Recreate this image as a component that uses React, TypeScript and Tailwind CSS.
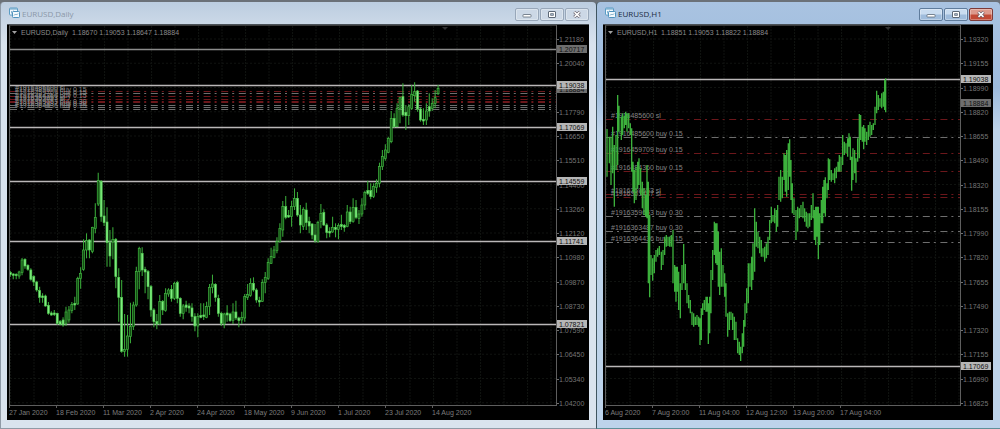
import { useId } from 'react';

type Candle = [number, number, number, number, number?];
type Level = { y: number; price: string; dim?: boolean };
type Order = { y: number; label: string; red?: boolean };
type Series = { x: number; y: number; bars: number[][] };

const GREEN = '#3cb03c';
const PLOT_H = 379;

// [high, body top, body bottom, low, 1 = bullish], three units per pixel
const DAILY: Candle[] = [
    [363, 368, 374, 380], [370, 372, 376, 388], [370, 373, 377, 388], [362, 366, 378, 386, 1],
    [324, 330, 368, 376, 1], [325, 328, 348, 356], [343, 346, 358, 362], [355, 360, 388, 392],
    [376, 380, 396, 408], [392, 396, 420, 425], [410, 422, 442, 458], [430, 438, 443, 458],
    [434, 438, 468, 470], [456, 466, 490, 494], [484, 489, 495, 497], [480, 489, 494, 498],
    [488, 490, 520, 524], [510, 515, 523, 526], [502, 510, 525, 530], [470, 486, 520, 528, 1],
    [468, 480, 510, 518, 1], [456, 464, 482, 490, 1], [440, 460, 465, 480], [380, 386, 462, 464, 1],
    [352, 370, 386, 416, 1], [268, 300, 358, 362, 1], [250, 272, 300, 325, 1], [268, 270, 300, 325],
    [230, 232, 305, 310, 1], [160, 202, 236, 250, 1], [68, 92, 162, 168, 1], [90, 94, 200, 215],
    [150, 198, 218, 228], [172, 216, 278, 350], [240, 278, 318, 350], [232, 268, 276, 328, 1],
    [264, 268, 380, 415], [355, 382, 442, 515], [390, 442, 604, 608], [492, 598, 604, 620, 1],
    [495, 558, 598, 620, 1], [458, 530, 560, 580, 1], [455, 465, 530, 540, 1], [350, 365, 465, 470, 1],
    [290, 295, 365, 418, 1], [292, 310, 360, 378], [350, 358, 366, 430], [360, 365, 410, 448],
    [405, 410, 480, 500], [475, 480, 515, 532], [492, 515, 522, 538], [435, 455, 522, 524, 1],
    [450, 455, 480, 495], [415, 430, 482, 485, 1], [415, 420, 432, 440, 1], [405, 418, 445, 455],
    [395, 400, 445, 450, 1], [392, 398, 445, 460], [442, 445, 490, 500], [462, 468, 490, 508, 1],
    [452, 465, 472, 485], [460, 468, 474, 490], [460, 474, 500, 515], [490, 500, 528, 544],
    [490, 500, 528, 562, 1], [460, 496, 502, 505], [460, 495, 500, 510], [455, 470, 502, 505, 1],
    [402, 412, 470, 495, 1], [374, 402, 412, 430, 1], [400, 403, 442, 455], [434, 445, 490, 500],
    [485, 490, 520, 528], [488, 492, 522, 535, 1], [466, 489, 495, 515], [488, 492, 512, 515],
    [460, 486, 512, 522, 1], [452, 486, 504, 510], [500, 504, 512, 532], [485, 502, 510, 522, 1],
    [432, 440, 504, 515, 1], [402, 434, 442, 450, 1], [385, 400, 436, 440, 1], [382, 400, 420, 425],
    [415, 420, 450, 458], [440, 451, 456, 470], [388, 398, 454, 456, 1], [366, 382, 398, 430, 1],
    [325, 338, 385, 390, 1], [293, 320, 340, 342, 1], [288, 300, 322, 325, 1], [262, 275, 302, 310, 1],
    [220, 235, 275, 278, 1], [153, 170, 240, 260, 1], [138, 170, 202, 208], [180, 196, 201, 204],
    [152, 170, 200, 230, 1], [115, 145, 170, 180, 1], [126, 145, 195, 200], [165, 195, 225, 250],
    [172, 178, 230, 240, 1], [158, 180, 218, 240], [200, 215, 228, 250], [220, 222, 255, 268],
    [222, 255, 272, 278], [212, 218, 275, 278, 1], [162, 190, 215, 235, 1], [178, 188, 225, 228],
    [220, 225, 248, 265], [232, 244, 249, 262], [200, 232, 246, 248, 1], [220, 232, 238, 262],
    [220, 226, 238, 268, 1], [194, 224, 230, 240], [222, 226, 232, 245], [165, 186, 230, 232, 1],
    [170, 186, 215, 222], [145, 172, 215, 218, 1], [150, 172, 202, 208], [180, 192, 205, 222, 1],
    [145, 165, 192, 200, 1], [122, 128, 165, 180, 1], [92, 122, 130, 135], [100, 122, 140, 148],
    [100, 110, 140, 144, 1], [88, 100, 112, 128, 1], [38, 50, 100, 112, 1], [0, 20, 50, 60, 1],
    [-17, 0, 25, 32, 1], [-40, -35, 7, 10, 1], [-117, -95, -25, -20, 1], [-110, -95, -70, -67],
    [-140, -125, -70, -68, 1], [-160, -157, -125, -80, 1], [-200, -160, -105, -100], [-135, -113, -103, -60],
    [-137, -130, -103, -75, 1], [-195, -167, -125, -120, 1], [-203, -175, -163, -145, 1], [-180, -177, -123, -115],
    [-127, -123, -90, -85], [-125, -92, -87, -75], [-140, -117, -90, -75, 1], [-170, -130, -117, -100],
    [-155, -140, -125, -117, 1], [-180, -157, -140, -125, 1], [-195, -185, -170, -165, 1],
];

// [x, high, low], three units per pixel from each block's origin
const HOURLY: Series[] = [
    {
        x: -5, y: 59,
        bars: [
            [18, 132, 275], [25, 155, 235], [30, 155, 300], [35, 125, 265], [40, 180, 365], [45, 150, 255],
            [50, 30, 240], [54, 62, 140], [61, 95, 165], [65, 85, 150], [70, 92, 130], [74, 80, 120],
            [78, 85, 140], [83, 85, 130], [88, 115, 150], [92, 130, 260], [96, 230, 320], [100, 255, 355],
            [105, 245, 345], [110, 230, 312], [114, 220, 300], [119, 250, 330], [124, 290, 370],
            [129, 310, 390], [134, 330, 395], [138, 240, 400], [142, 290, 595], [146, 390, 637],
        ],
    },
    {
        x: -10, y: 114,
        bars: [
            [165, 345, 405], [170, 355, 422], [175, 345, 400], [180, 330, 365], [185, 325, 350], [190, 318, 345],
            [196, 335, 390], [201, 330, 375], [206, 290, 345], [211, 285, 320], [216, 290, 318], [221, 290, 320],
            [226, 285, 320], [231, 270, 430], [236, 375, 455], [240, 380, 485], [244, 380, 455], [248, 395, 510],
            [253, 430, 535], [258, 375, 450], [263, 312, 430], [268, 372, 450], [273, 430, 490], [278, 465, 505],
            [283, 480, 520], [288, 515, 555], [293, 520, 560], [298, 530, 555], [303, 525, 555], [308, 530, 560],
            [312, 535, 615], [316, 505, 600], [320, 490, 525], [325, 480, 510], [330, 470, 515], [334, 470, 515],
            [337, 490, 612], [341, 470, 580], [345, 390, 520], [350, 330, 420], [355, 245, 345], [359, 250, 370],
            [363, 250, 375], [367, 275, 440], [371, 335, 465], [376, 325, 440], [381, 375, 440], [386, 400, 470],
            [390, 430, 530], [395, 520, 590], [400, 515, 570], [405, 515, 540], [410, 520, 570], [415, 530, 600],
            [420, 545, 600], [425, 595, 640], [430, 605, 645], [434, 620, 663], [439, 580, 640], [443, 540, 620],
            [447, 490, 560], [452, 445, 520], [457, 370, 490], [462, 370, 440], [467, 350, 450], [471, 310, 420],
            [476, 205, 395], [481, 245, 320], [486, 275, 325], [491, 290, 340], [496, 300, 350], [501, 325, 350],
            [506, 320, 365], [511, 310, 355], [516, 290, 345], [521, 240, 300], [526, 200, 250], [531, 225, 245],
            [536, 205, 250], [541, 210, 275], [545, 195, 260], [549, 110, 180], [554, 90, 185], [559, 110, 175],
            [564, 40, 120], [568, 45, 155], [572, 30, 170], [577, 10, 150], [581, -2, 110], [585, 60, 180],
            [589, 130, 220], [594, 175, 225], [600, 210, 300], [605, 200, 275], [610, 205, 235], [615, 195, 230],
            [621, 185, 235], [626, 205, 245], [631, 215, 260], [636, 220, 265],
        ],
    },
    {
        x: 185, y: 44,
        bars: [
            [56, 430, 470], [61, 405, 450], [66, 370, 445], [70, 420, 510], [74, 410, 525], [78, 410, 500],
            [82, 410, 568], [86, 430, 525], [91, 390, 460], [95, 350, 460], [99, 330, 430], [103, 322, 440],
            [108, 340, 385], [112, 265, 360], [116, 268, 330], [121, 300, 335], [126, 310, 330], [131, 295, 340],
            [136, 290, 325], [141, 275, 305], [145, 255, 305], [150, 260, 305], [155, 195, 285], [160, 215, 255],
            [165, 220, 250], [170, 205, 260], [174, 190, 230], [178, 200, 270], [182, 260, 362], [186, 235, 330],
            [191, 240, 310], [195, 265, 338], [200, 205, 275], [205, 132, 265], [209, 135, 210], [214, 170, 215],
            [218, 165, 238], [222, 175, 215], [227, 185, 225], [232, 165, 210], [237, 155, 200], [242, 165, 195],
            [247, 160, 180], [252, 110, 165], [257, 62, 130], [262, 75, 120], [267, 85, 110], [272, 70, 115],
            [277, 65, 110], [281, 30, 120], [284, 25, 127],
        ],
    },
];

const ORDER_LABELS = [
    '#1916485600 sl', '#1916485600 buy 0.15', '#1916459709 buy 0.15', '#1916484360 buy 0.15',
    '#1916359653 sl', '#1916363487 sl', '#1916359653 buy 0.30', '#1916363487 buy 0.30', '#1916364436 buy 0.15',
];
const RED = [true, false, true, true, true, true, false, false, false];
const toOrders = (ys: number[]): Order[] => ys.map((y, i) => ({ y, label: ORDER_LABELS[i], red: RED[i] }));

const DAILY_CHART = {
    symbol: 'EURUSD,Daily',
    ohlc: '1.18670 1.19053 1.18647 1.18884',
    ohlcX: 62,
    marker: 435,
    prices: ['1.21180', '1.20040', '1.18900', '1.17790', '1.16650', '1.15510', '1.14400', '1.13260', '1.12120', '1.10980', '1.09870', '1.08730', '1.07590', '1.06450', '1.05340', '1.04200'],
    dates: ['27 Jan 2020', '18 Feb 2020', '11 Mar 2020', '2 Apr 2020', '24 Apr 2020', '18 May 2020', '9 Jun 2020', '1 Jul 2020', '23 Jul 2020', '14 Aug 2020'],
    last: { y: 62, price: '1.18884' },
    levels: [
        { y: 23, price: '1.20717', dim: true }, { y: 59, price: '1.19038' }, { y: 101, price: '1.17069' },
        { y: 155, price: '1.14559' }, { y: 215, price: '1.11741' }, { y: 298, price: '1.07821' },
    ] as Level[],
    orders: toOrders([65, 67, 70, 73, 75, 76, 79, 81, 83]),
};

const HOURLY_CHART = {
    symbol: 'EURUSD,H1',
    ohlc: '1.18851 1.19053 1.18822 1.18884',
    ohlcX: 55,
    marker: 282,
    prices: ['1.19320', '1.19155', '1.18990', '1.18820', '1.18655', '1.18490', '1.18320', '1.18155', '1.17990', '1.17820', '1.17655', '1.17490', '1.17320', '1.17155', '1.16990', '1.16825'],
    dates: ['6 Aug 2020', '7 Aug 20:00', '11 Aug 04:00', '12 Aug 12:00', '13 Aug 20:00', '17 Aug 04:00'],
    last: { y: 76, price: '1.18884' },
    levels: [{ y: 53, price: '1.19038' }, { y: 340, price: '1.17069' }] as Level[],
    orders: toOrders([93, 111, 127, 145, 168, 171, 190, 205, 216]),
};

type ChartData = typeof DAILY_CHART;

const priceY = (i: number) => 13 + i * 24.25;

function DailyCandles() {
    return (
        <g transform="translate(0 124) scale(0.3333)">
            {DAILY.map(([high, top, bottom, low, up], i) => {
                const x = 1 + i * 8.79;
                return (
                    <g key={i}>
                        <path d={`M${x} ${high}V${low}`} stroke="#38a838" strokeWidth={3.2} />
                        <rect
                            x={x - 3} y={top} width={6} height={Math.max(bottom - top, 4)}
                            fill={up ? '#125012' : '#80ee80'} stroke={up ? '#43b843' : '#50c850'} strokeWidth={2}
                        />
                    </g>
                );
            })}
        </g>
    );
}

function HourlyBars() {
    return (
        <>
            {HOURLY.map((s, i) => (
                <path
                    key={i}
                    transform={`translate(${s.x} ${s.y}) scale(0.3333)`}
                    d={s.bars.map(([x, high, low]) => `M${x} ${high}V${low}`).join('')}
                    stroke={GREEN}
                    strokeWidth={4}
                />
            ))}
        </>
    );
}

function Plot({ chart, children }: { chart: ChartData; children: React.ReactNode }) {
    const gridId = useId();
    return (
        <svg className="block w-full" height={PLOT_H} role="img" aria-label={chart.symbol}>
            <defs>
                <pattern id={gridId} width="23.5" height="3" patternUnits="userSpaceOnUse">
                    <path d="M0.5 0V2" stroke="#0f120f" />
                </pattern>
            </defs>
            <rect width="100%" height="100%" fill={`url(#${gridId})`} />
            {chart.prices.map((p, i) => (
                <line key={p} x1="0" x2="100%" y1={priceY(i)} y2={priceY(i)} stroke="#101310" strokeDasharray="2 2" />
            ))}

            {chart.orders.map((o, i) => (
                <g key={i}>
                    <line
                        x1="0" x2="100%" y1={o.y + 0.5} y2={o.y + 0.5}
                        stroke={o.red ? '#6c171b' : '#6e6e6e'} strokeDasharray="7 4 2 4.6"
                    />
                    <text x="5" y={o.y - 1} fill="#858585" className="text-[7px]">{o.label}</text>
                </g>
            ))}

            {chart.levels.map((l) => (
                <line key={l.price} x1="0" x2="100%" y1={l.y + 0.5} y2={l.y + 0.5} stroke={l.dim ? '#8c8c8c' : '#bab7b8'} strokeWidth="1.4" />
            ))}
            {children}

            <path d={`M${chart.marker - 3} 1h6l-3 3z`} fill="#303030" />
            <path d="M2 5h5l-2.500 3z" fill="#a0a0a0" />
            <text x="11" y="9" fill="#8a8a8a" className="text-[7px]">{chart.symbol}</text>
            <text x={chart.ohlcX} y="9" fill="#8a8a8a" className="text-[7px]">{chart.ohlc}</text>
        </svg>
    );
}

function PriceScale({ chart }: { chart: ChartData }) {
    return (
        <svg className="block w-full overflow-visible" height={PLOT_H}>
            {chart.prices.map((p, i) => (
                <g key={p}>
                    <path d={`M0 ${Math.round(priceY(i)) + 0.5}h2`} stroke="#707070" />
                    <text x="2" y={Math.round(priceY(i)) + 3} fill="#757575" className="text-[7px]">{p}</text>
                </g>
            ))}
            <rect y={chart.last.y - 3} width="30" height="8" fill="#6e6e6e" />
            <text x="2" y={chart.last.y + 4} fill="#111" className="text-[7px]">{chart.last.price}</text>
            {chart.levels.map((l) => (
                <g key={l.price}>
                    <rect y={l.y - 4} width="30" height="8" fill={l.dim ? '#6e6e6e' : '#b6b6b6'} />
                    <text x="2" y={l.y + 3} fill="#111" className="text-[7px]">{l.price}</text>
                </g>
            ))}
        </svg>
    );
}

function Chart({ chart, children }: { chart: ChartData; children: React.ReactNode }) {
    return (
        <div className="border-t border-[#4b5258] bg-black pl-[2px]">
            <div className="grid grid-cols-[minmax(0,1fr)_33px]">
                <div className="border-b border-l border-t border-[#5e5e5e] border-t-[#3a3a3a]">
                    <Plot chart={chart}>{children}</Plot>
                </div>
                <div className="border-l border-[#5e5e5e] pt-px">
                    <PriceScale chart={chart} />
                </div>
            </div>
            <ol className="flex h-[14px] overflow-hidden">
                {chart.dates.map((d) => (
                    <li key={d} className="w-[47px] shrink-0 whitespace-nowrap text-[7px] leading-[9px] text-[#7c7c7c]">
                        <span className="block h-[2px] w-px bg-[#5e5e5e]" />
                        {d}
                    </li>
                ))}
            </ol>
        </div>
    );
}

function ChartIcon() {
    return (
        <svg width="12" height="12" viewBox="0 0 12 12" fill="none">
            <rect x="0.500" y="1" width="8" height="7" rx="0.800" fill="#f3f9fd" stroke="#5a9cc4" />
            <path d="M1 2h7" stroke="#5a9cc4" />
            <path d="M2.500 4v2.500M4.500 3.500v2" stroke="#6fa5c8" strokeWidth="0.800" />
            <rect x="3.500" y="4.500" width="7" height="6" rx="0.800" fill="#f3f9fd" stroke="#4f92bc" />
            <path d="M5 8.500l1.500-1.500 1 1 1.500-1.500" stroke="#5b91b4" strokeWidth="0.800" />
        </svg>
    );
}

function WindowButtons({ active }: { active?: boolean }) {
    const base = active
        ? 'border-[#5f7c9c] bg-linear-to-b from-[#c9dcf0] from-45% to-[#9fbcdc] to-55%'
        : 'border-[#98a7b9] bg-[#ccd8e6]';
    const close = active
        ? 'border-[#7c3a38] bg-linear-to-b from-[#dd9a8c] from-45% to-[#c24a35] to-55%'
        : 'border-[#98a7b9] bg-[#ccd8e6]';
    const shape = 'flex h-[13px] w-[24px] items-center justify-center rounded-[2px] border shadow-[inset_0_0_0_1px_rgba(255,255,255,0.3)]';
    return (
        <div className="flex gap-px pt-[2px]">
            <button aria-label="Minimize" className={`${shape} ${base}`}>
                <svg width="12" height="9" viewBox="0 0 12 9"><rect x="2" y="4.500" width="8" height="2.500" rx="0.500" fill="#fff" stroke="#5d6977" strokeWidth="0.800" /></svg>
            </button>
            <button aria-label="Maximize" className={`${shape} ${base}`}>
                <svg width="12" height="9" viewBox="0 0 12 9">
                    <rect x="2.500" y="1.500" width="7" height="6" rx="0.500" fill="#fff" stroke="#5d6977" />
                    <rect x="4.700" y="3.700" width="2.600" height="1.600" fill="#b5c8dc" stroke="#5d6977" strokeWidth="0.800" />
                </svg>
            </button>
            <button aria-label="Close" className={`${shape} ${close}`}>
                <svg width="12" height="9" viewBox="0 0 12 9">
                    <path d="M3.300 2l5.400 5M8.700 2l-5.400 5" stroke="#5d5560" strokeWidth="3" />
                    <path d="M3.500 2.200l5 4.600M8.500 2.200l-5 4.600" stroke="#fff" strokeWidth="1.600" />
                </svg>
            </button>
        </div>
    );
}

function ChartWindow({ title, active, children }: { title: string; active?: boolean; children: React.ReactNode }) {
    const frame = active
        ? 'border-[#3f5560] border-b-[#5f8f98] bg-linear-to-b from-[#a9c3e1] from-0% via-[#9dbbdd] via-20% to-[#bdd3ea] to-30%'
        : 'border-[#8f9aa6] bg-linear-to-b from-[#bccde0] to-[#d9e3ee] to-10%';
    return (
        <section className={`min-w-0 rounded-t-[4px] border-b border-l pb-[8px] pl-[6px] pr-[7px] ${frame}`}>
            <header className="flex h-[22px] items-center pl-[2px]">
                <ChartIcon />
                <h2 className={`flex-1 pl-px pt-[2px] font-['Open_Sans',sans-serif] text-[8px] leading-[12px] ${active ? 'text-[#1b2c42]' : 'text-[#8b98a8]'}`}>{title}</h2>
                <WindowButtons active={active} />
            </header>
            {children}
        </section>
    );
}

export default function App() {
    return (
        <main className="grid grid-cols-[596fr_404fr] bg-[#6b7178] pt-[2px] font-['Liberation_Sans',Arial,sans-serif]">
            <ChartWindow title="EURUSD,Daily">
                <Chart chart={DAILY_CHART}>
                    <DailyCandles />
                </Chart>
            </ChartWindow>
            <ChartWindow title="EURUSD,H1" active>
                <Chart chart={HOURLY_CHART}>
                    <HourlyBars />
                </Chart>
            </ChartWindow>
        </main>
    );
}
